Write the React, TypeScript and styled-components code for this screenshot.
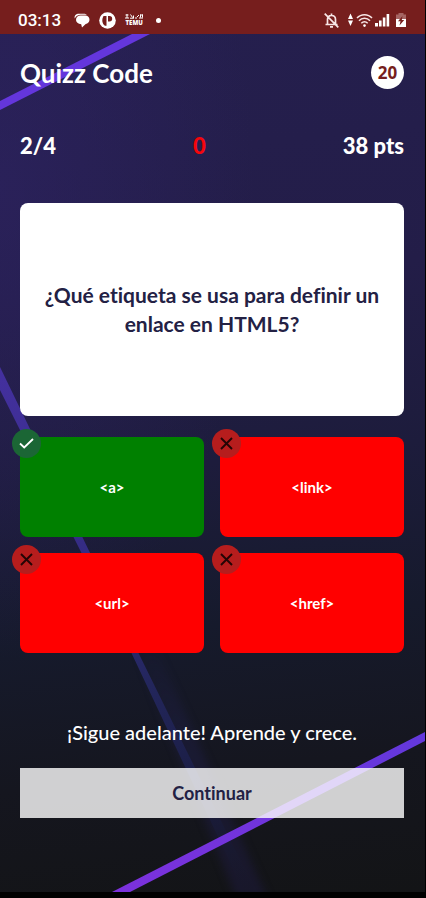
import React from "react";
import styled, { createGlobalStyle } from "styled-components";

const GlobalStyle = createGlobalStyle`
  *, *::before, *::after { box-sizing: border-box; }
  body { margin: 0; background: #000; }
`;

const Phone = styled.div`
  display: flex;
  flex-direction: column;
  min-height: 100vh;
  padding: 0 1px 6px 0;
  background: #000;
  color: #fff;
  font-family: Lato, "Open Sans", sans-serif;
  font-variant-ligatures: none;
`;

const StatusBar = styled.header`
  display: flex;
  align-items: center;
  justify-content: space-between;
  height: 34px;
  padding: 6px 19px 0 18px;
  background: #761e1d;
`;

const StatusGroup = styled.div<{ $gap: number }>`
  display: flex;
  align-items: center;
  gap: ${(p) => p.$gap}px;
`;

const Clock = styled.time`
  font: 500 17px/20px Roboto, sans-serif;
`;

const Screen = styled.main`
  position: relative;
  isolation: isolate;
  display: flex;
  flex: 1;
  flex-direction: column;
  padding: 22px 21px 74px 20px;
  overflow: hidden;
  background:
    radial-gradient(ellipse 60% 55% at 0% 18%, rgba(48, 36, 104, 0.5), transparent),
    linear-gradient(174deg, #251f4e 0%, #231d48 30%, #1d1c3c 50%, #161a2c 68%, #15161f 84%, #131416 100%);
`;

const Backdrop = styled.svg`
  position: absolute;
  inset: 0;
  z-index: -1;
  width: 100%;
  height: 100%;
`;

const TitleRow = styled.div`
  display: flex;
  align-items: center;
  justify-content: space-between;
`;

const Title = styled.h1`
  margin: 0;
  font-size: 26px;
  font-weight: 700;
  line-height: 30px;
`;

const Timer = styled.div`
  display: grid;
  place-items: center;
  width: 33px;
  height: 33px;
  border-radius: 50%;
  background: #fff;
  color: #761e1d;
  font: 700 17px/20px "Noto Sans", sans-serif;
`;

const ScoreRow = styled.div`
  display: flex;
  align-items: center;
  justify-content: space-between;
  margin-top: 42px;
  font-size: 22px;
  font-weight: 900;
  line-height: 30px;
`;

const Missed = styled.span`
  color: #f5060c;
`;

const QuestionCard = styled.section`
  display: grid;
  place-items: center;
  min-height: 213px;
  margin-top: 42px;
  padding: 15px 16px 17px;
  border-radius: 8px;
  background: #fff;
`;

const Question = styled.h2`
  margin: 0;
  color: #232144;
  font-size: 21px;
  font-weight: 700;
  line-height: 29px;
  text-align: center;
`;

const Answers = styled.div`
  display: grid;
  grid-template-columns: 1fr 1fr;
  gap: 16px;
  margin-top: 21px;
`;

const AnswerButton = styled.button<{ $correct: boolean }>`
  position: relative;
  height: 100px;
  border: 0;
  border-radius: 8px;
  background: ${(p) => (p.$correct ? "#008000" : "#ff0000")};
  color: #fff;
  font: 700 15px/20px Lato, sans-serif;
  font-variant-ligatures: none;
`;

const Mark = styled.span<{ $correct: boolean }>`
  position: absolute;
  top: -8px;
  left: -8px;
  display: grid;
  place-items: center;
  width: 29px;
  height: 29px;
  border-radius: 50%;
  background: ${(p) => (p.$correct ? "#1b6635" : "#b61d1d")};
`;

const Encouragement = styled.p`
  margin: 64px 0 0;
  font-size: 20px;
  font-weight: 500;
  line-height: 30px;
  text-align: center;
`;

const ContinueButton = styled.button`
  height: 50px;
  margin-top: 21px;
  border: 0;
  background: rgba(255, 255, 255, 0.8);
  color: #232144;
  font: 700 18px/24px Lato, sans-serif;
  font-variant-ligatures: none;
`;

const ChatIcon = () => (
  <svg width="16" height="15" viewBox="0 0 16 15" fill="#fff" aria-hidden="true">
    <path d="M.8 5.500C0 2.500 2 .8 5 .8h4.500c1.500 0 2.500.4 3.300 1H6.500C4 1.800 2 3 .8 5.500z" />
    <path d="M6.500 2.600h4.700c2.700 0 4.300 1.800 4.300 4.200 0 2.300-1.600 3.800-3.800 4.100L8 14.500l-.8-3.300C4 10.800 2 9.300 2 7c0-2.600 1.800-4.400 4.500-4.400z" />
  </svg>
);

const DiscIcon = () => (
  <svg width="17" height="17" viewBox="0 0 17 17" aria-hidden="true">
    <circle cx="8.500" cy="8.500" r="8.300" fill="#fff" />
    <path d="M4.500 4h3v9.800H6c-3-2-3.500-6-1.500-9.800z" fill="#761e1d" />
    <path d="M9 4h1.500a2.700 2.700 0 0 1 0 5.400H9z" fill="#761e1d" />
  </svg>
);

const StoreBadge = styled.span`
  display: flex;
  flex-direction: column;
  align-items: center;
  gap: 1px;
  font: 900 6px/6px "Open Sans", sans-serif;
`;

const StoreArt = () => (
  <svg width="18" height="5" viewBox="0 0 18 5" fill="none" stroke="#fff" aria-hidden="true">
    <path d="M.5 1h3M0 4h4M2 0v4M5.500 .5l2 3M5 4.200h4M8.500 1.500v2.500M10 4h2M12 3l2-2M14 4h4M15.500 .5v3M17.500 .5v3M15 1h3" />
  </svg>
);

const Dot = styled.span`
  width: 5px;
  height: 5px;
  border-radius: 50%;
  background: #fff;
`;

const MutedBell = () => (
  <svg width="15" height="15" viewBox="0 0 15 15" fill="none" stroke="#f8e6e6" strokeWidth="1.700" aria-hidden="true">
    <path d="M3.500 11.500V6.500c0-2.500 1.500-4 4-4s4 1.500 4 4v5M1.500 11.500h12M7.500 .5v2M6 13.800h3M.7 .7l13.600 13.600" />
  </svg>
);

const SignalIcons = () => (
  <svg width="42" height="14" viewBox="0 0 42 14" aria-hidden="true">
    <path d="M0 6l2.500-5.500L5 6zM0 7.500h5L2.500 13z" fill="#fff" />
    <g fill="none" stroke="#f8e6e6" strokeWidth="1.500">
      <path d="M9 5c4-4.500 11-4.500 15 0M11 7.800c3-3.300 8-3.300 11 0M13.300 10.300c2-2 4.400-2 6.400 0" />
    </g>
    <circle cx="16.500" cy="12.600" r="1.300" fill="#fff" />
    <path d="M27 10h3v3.500h-3zM31 7.500h2.600v6H31zM34.800 4.500h2.600v9h-2.600zM38.600 1h2.600v12.500h-2.600z" fill="#fff" />
  </svg>
);

const BatteryIcon = () => (
  <svg width="10" height="14" viewBox="0 0 10 14" aria-hidden="true">
    <path d="M0 1.500h2.500V0h5v1.500H10V6H0z" fill="#a56463" />
    <path d="M0 6h10v8H0z" fill="#fff" />
    <path d="M6.500 3L2 8.300h2.500L3.500 12.500 8.200 7H5.800z" fill="#761e1d" />
  </svg>
);

const CheckIcon = () => (
  <svg width="15" height="15" viewBox="0 0 15 15" fill="none" stroke="#fff" strokeWidth="1.800" aria-hidden="true">
    <path d="M1 7.500l4.200 4L14 3" />
  </svg>
);

const CrossIcon = () => (
  <svg width="13" height="13" viewBox="0 0 13 13" fill="none" stroke="#240505" strokeWidth="1.900" aria-hidden="true">
    <path d="M1 1l11 11M12 1L1 12" />
  </svg>
);

const BackdropArt = () => (
  <Backdrop viewBox="0 0 425 858" preserveAspectRatio="none" aria-hidden="true">
    <defs>
      <linearGradient id="beam" x1="0" y1="330" x2="260" y2="858" gradientUnits="userSpaceOnUse">
        <stop offset="0" stopColor="#44309f" />
        <stop offset="0.450" stopColor="#302b7c" />
        <stop offset="0.600" stopColor="#23265c" />
        <stop offset="0.800" stopColor="#1a1d42" />
        <stop offset="1" stopColor="#171829" stopOpacity="0" />
      </linearGradient>
      <linearGradient id="glow" x1="130" y1="600" x2="260" y2="858" gradientUnits="userSpaceOnUse">
        <stop offset="0" stopColor="#292769" stopOpacity="0" />
        <stop offset="0.400" stopColor="#25235a" stopOpacity="0.300" />
        <stop offset="1" stopColor="#201b44" stopOpacity="0.450" />
      </linearGradient>
      <linearGradient id="ray" x1="115" y1="0" x2="425" y2="0" gradientUnits="userSpaceOnUse">
        <stop offset="0" stopColor="#7c31dc" />
        <stop offset="1" stopColor="#6338dc" />
      </linearGradient>
      <filter id="soften" x="-30%" y="-10%" width="160%" height="120%" colorInterpolationFilters="sRGB">
        <feGaussianBlur stdDeviation="4" />
      </filter>
    </defs>
    <path d="M136 618h22l120 270h-32z" fill="url(#glow)" filter="url(#soften)" />
    <path d="M0 333L138 618 256 858h-12L131 618 0 356z" fill="url(#beam)" />
    <path d="M132 0h18L0 76V67z" fill="#6436dc" />
    <path d="M112 858L425 698v9L130 858z" fill="url(#ray)" />
  </Backdrop>
);

const answers = [
  { label: "<a>", correct: true },
  { label: "<link>", correct: false },
  { label: "<url>", correct: false },
  { label: "<href>", correct: false },
];

export default function App() {
  return (
    <Phone>
      <GlobalStyle />
      <StatusBar>
        <StatusGroup $gap={13}>
          <Clock>03:13</Clock>
          <StatusGroup $gap={9}>
            <ChatIcon />
            <DiscIcon />
            <StoreBadge>
              <StoreArt />
              TEMU
            </StoreBadge>
          </StatusGroup>
          <Dot />
        </StatusGroup>
        <StatusGroup $gap={9}>
          <MutedBell />
          <StatusGroup $gap={6}>
            <SignalIcons />
            <BatteryIcon />
          </StatusGroup>
        </StatusGroup>
      </StatusBar>
      <Screen>
        <BackdropArt />
        <TitleRow>
          <Title>Quizz Code</Title>
          <Timer>20</Timer>
        </TitleRow>
        <ScoreRow>
          <span>2/4</span>
          <Missed>0</Missed>
          <span>38 pts</span>
        </ScoreRow>
        <QuestionCard>
          <Question>¿Qué etiqueta se usa para definir un enlace en HTML5?</Question>
        </QuestionCard>
        <Answers>
          {answers.map(({ label, correct }) => (
            <AnswerButton key={label} type="button" $correct={correct}>
              <Mark $correct={correct}>{correct ? <CheckIcon /> : <CrossIcon />}</Mark>
              {label}
            </AnswerButton>
          ))}
        </Answers>
        <Encouragement>¡Sigue adelante! Aprende y crece.</Encouragement>
        <ContinueButton type="button">Continuar</ContinueButton>
      </Screen>
    </Phone>
  );
}
